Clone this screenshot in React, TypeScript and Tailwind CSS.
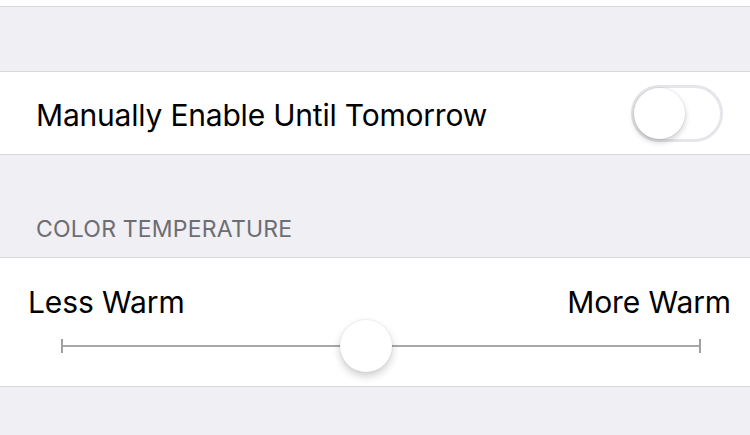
import React, { useState } from "react"

/* ---------------- SWITCH ---------------- */

function Toggle({ on, onChange }: { on: boolean; onChange: (v: boolean) => void }) {
  return (
    <button
      onClick={() => onChange(!on)}
      className={
        on
          ? "relative w-[92px] h-[57px] rounded-full bg-[#4cd964] border-[3px] border-[#4cd964]"
          : "relative w-[92px] h-[57px] rounded-full bg-white border-[3px] border-[#e5e5ea]"
      }
    >
      <span
        className={
          on
            ? "absolute top-[0px] left-[35px] w-[51px] h-[51px] rounded-full bg-white shadow-[0_3px_6px_rgba(0,0,0,0.2),0_0_0_1px_rgba(0,0,0,0.04)]"
            : "absolute top-[0px] left-[0px] w-[51px] h-[51px] rounded-full bg-white shadow-[0_3px_6px_rgba(0,0,0,0.2),0_0_0_1px_rgba(0,0,0,0.04)]"
        }
      />
    </button>
  )
}

/* ---------------- PAGE ---------------- */

export default function App() {
  const [manual, setManual] = useState(false)
  const [warmth, setWarmth] = useState(47.6)

  return (
    <div
      className="w-[750px] h-[435px] overflow-hidden bg-[#efeff4] flex flex-col"
      style={{ fontFamily: "Inter, 'Liberation Sans', sans-serif" }}
    >
      {/* top of previous group */}
      <div className="h-[7px] bg-white border-b border-[#d8d8dc]" />

      <div className="h-[64px]" />

      {/* manual row */}
      <div className="h-[84px] bg-white border-y border-[#d8d8dc] flex items-center justify-between pl-[36px] pr-[27px]">
        <span className="text-[30px] leading-[40px] pt-[4px] tracking-[-0.2px] text-black">
          Manually Enable Until Tomorrow
        </span>
        <Toggle on={manual} onChange={setManual} />
      </div>

      {/* section header */}
      <div className="h-[102px] flex items-end pl-[36px] pb-[11px]">
        <span className="text-[23px] text-[#6d6d72] tracking-[0.2px]">
          COLOR TEMPERATURE
        </span>
      </div>

      {/* slider group */}
      <div className="h-[130px] bg-white border-y border-[#d8d8dc] flex flex-col pl-[28px] pr-[19px] pt-[24px]">
        <div className="flex justify-between text-[30px] text-black leading-[40px] tracking-[-0.1px]">
          <span>Less Warm</span>
          <span>More Warm</span>
        </div>
        <div className="relative ml-[33px] mr-[30px] mt-[17px] h-[14px] flex items-center">
          <div className="absolute left-0 top-0 w-[2px] h-[14px] bg-[#a0a0a4]" />
          <div className="w-full h-[2px] bg-[#a8a8ac]" />
          <div className="absolute right-0 top-0 w-[2px] h-[14px] bg-[#a0a0a4]" />
          <button
            onClick={() => setWarmth(warmth < 50 ? 60 : 47.6)}
            className="absolute top-[-19px] w-[52px] h-[52px] rounded-full bg-white shadow-[0_4px_8px_rgba(0,0,0,0.2),0_0_0_1px_rgba(0,0,0,0.04)]"
            style={{ left: `calc(${warmth}% - 26px)` }}
          />
        </div>
      </div>
    </div>
  )
}
